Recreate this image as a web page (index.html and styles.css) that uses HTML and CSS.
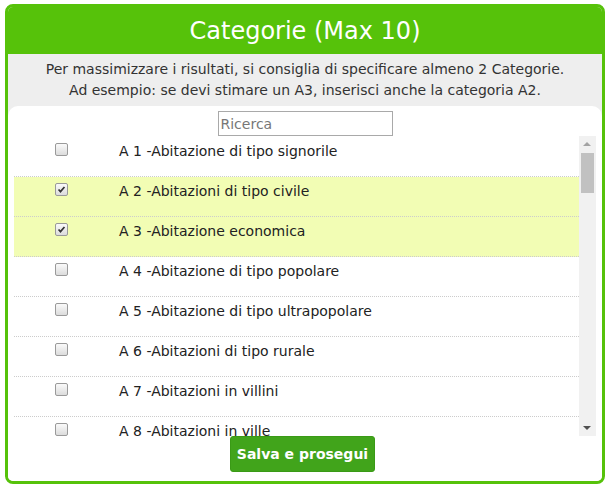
FILE: index.html
```html
<!DOCTYPE html>
<html lang="it">
<head>
<meta charset="utf-8">
<title>Categorie</title>
<link rel="stylesheet" href="styles.css">
</head>
<body>
<div class="box">
  <div class="head">Categorie (Max 10)</div>
  <div class="info">
    <p>Per massimizzare i risultati, si consiglia di specificare almeno 2 Categorie.</p>
    <p>Ad esempio: se devi stimare un A3, inserisci anche la categoria A2.</p>
    <div class="panel">
      <div class="search"><input type="text" placeholder="Ricerca"></div>
      <div class="listwrap">
        <div class="list">
          <div class="row"><span class="cb"></span><span class="lbl">A 1 -Abitazione di tipo signorile</span></div>
          <div class="row sel"><span class="cb"><svg viewBox="0 0 13 13" width="13" height="13"><path d="M3 6.5 L5.3 9 L10 3.6" fill="none" stroke="#333" stroke-width="2"/></svg></span><span class="lbl">A 2 -Abitazioni di tipo civile</span></div>
          <div class="row sel"><span class="cb"><svg viewBox="0 0 13 13" width="13" height="13"><path d="M3 6.5 L5.3 9 L10 3.6" fill="none" stroke="#333" stroke-width="2"/></svg></span><span class="lbl">A 3 -Abitazione economica</span></div>
          <div class="row"><span class="cb"></span><span class="lbl">A 4 -Abitazione di tipo popolare</span></div>
          <div class="row"><span class="cb"></span><span class="lbl">A 5 -Abitazione di tipo ultrapopolare</span></div>
          <div class="row"><span class="cb"></span><span class="lbl">A 6 -Abitazioni di tipo rurale</span></div>
          <div class="row"><span class="cb"></span><span class="lbl">A 7 -Abitazioni in villini</span></div>
          <div class="row"><span class="cb"></span><span class="lbl">A 8 -Abitazioni in ville</span></div>
          <div class="row"><span class="cb"></span><span class="lbl">A 9 -Castelli, palazzi di eminenti pregi artistici o storici</span></div>
          <div class="row"><span class="cb"></span><span class="lbl">A 10 -Uffici e studi privati</span></div>
        </div>
        <div class="sbar">
          <div class="arr up"></div>
          <div class="track"><div class="thumb"></div></div>
          <div class="arr down"></div>
        </div>
      </div>
      <div class="actions"><button class="btn" type="button">Salva e prosegui</button></div>
    </div>
  </div>
</div>
</body>
</html>
```

FILE: styles.css
```css
html, body {
  margin: 0;
  padding: 0;
  background: #fff;
}
body {
  font-family: "DejaVu Sans", Verdana, sans-serif;
  color: #333;
}
.box {
  box-sizing: border-box;
  width: 600px;
  height: 480px;
  margin: 4px 0 0 5px;
  border: 3px solid #56c20a;
  border-radius: 8px;
  background: #eee;
  display: flex;
  flex-direction: column;
  overflow: hidden;
}
.head {
  background: #56c20a;
  color: #fff;
  height: 47px;
  font-size: 24px;
  line-height: 49px;
  text-align: center;
  flex: none;
}
.info {
  flex: 1;
  display: flex;
  flex-direction: column;
  padding-top: 5px;
}
.info p {
  margin: 0;
  text-align: center;
  font-size: 14px;
  line-height: 21px;
  color: #333;
}
.panel {
  margin-top: 5px;
  flex: 1;
  background: #fff;
  border-radius: 10px 10px 0 0;
  display: flex;
  flex-direction: column;
}
.search {
  padding-top: 5px;
  display: flex;
  justify-content: center;
}
.search input {
  box-sizing: border-box;
  width: 175px;
  height: 25px;
  border: 1px solid #a9a9a9;
  padding: 0 2px;
  font-family: "DejaVu Sans", Verdana, sans-serif;
  font-size: 14px;
  color: #333;
  outline: none;
}
.search input::placeholder {
  color: #777;
}
.listwrap {
  margin: 0 6px;
  height: 300px;
  display: flex;
}
.list {
  flex: 1;
  overflow: hidden;
  padding-top: 1px;
}
.row {
  box-sizing: border-box;
  height: 40px;
  border-bottom: 1px dotted #ccc;
  display: flex;
  align-items: flex-start;
  padding-top: 6px;
}
.row.sel {
  background: #f2fdb4;
}
.cb {
  box-sizing: border-box;
  width: 13px;
  height: 13px;
  margin-left: 41px;
  border: 1px solid #9a9a9a;
  border-radius: 2px;
  background: linear-gradient(#fafafa, #dcdcdc);
  flex: none;
  display: flex;
}
.cb svg {
  width: 11px;
  height: 11px;
}
.lbl {
  margin-left: 51px;
  margin-top: -1px;
  font-size: 14px;
  line-height: 18px;
  color: #222;
  white-space: nowrap;
}
.sbar {
  width: 17px;
  background: #f1f1f1;
  display: flex;
  flex-direction: column;
  flex: none;
}
.arr {
  height: 17px;
  position: relative;
  flex: none;
}
.arr.up::after,
.arr.down::after {
  content: "";
  position: absolute;
  left: 4px;
  width: 0;
  height: 0;
  border-left: 4px solid transparent;
  border-right: 4px solid transparent;
}
.arr.up::after {
  top: 6px;
  border-bottom: 4px solid #a3a3a3;
}
.arr.down::after {
  top: 7px;
  border-top: 4px solid #505050;
}
.track {
  flex: 1;
  padding: 0 2px;
}
.thumb {
  height: 40px;
  background: #c1c1c1;
}
.actions {
  display: flex;
  justify-content: center;
  padding-right: 5px;
}
.btn {
  width: 145px;
  height: 36px;
  border: 1px solid #3a9a16;
  border-radius: 3px;
  background: #41a41b;
  color: #fff;
  font-family: "DejaVu Sans", Verdana, sans-serif;
  font-weight: bold;
  font-size: 14px;
  padding: 0;
}
```
